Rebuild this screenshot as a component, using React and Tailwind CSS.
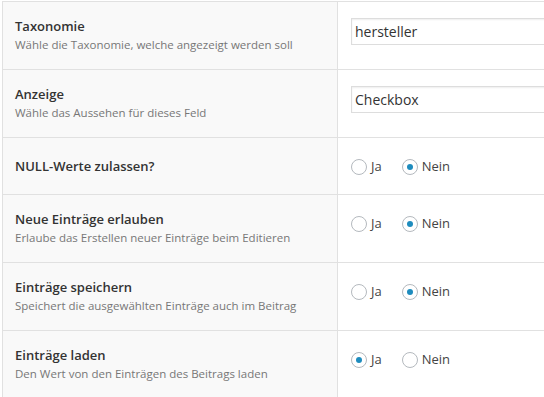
const rows = [
  { label: 'Taxonomie', desc: 'Wähle die Taxonomie, welche angezeigt werden soll', type: 'input', value: 'hersteller' },
  { label: 'Anzeige', desc: 'Wähle das Aussehen für dieses Feld', type: 'input', value: 'Checkbox' },
  { label: 'NULL-Werte zulassen?', type: 'radio', checked: 'Nein' },
  { label: 'Neue Einträge erlauben', desc: 'Erlaube das Erstellen neuer Einträge beim Editieren', type: 'radio', checked: 'Nein' },
  { label: 'Einträge speichern', desc: 'Speichert die ausgewählten Einträge auch im Beitrag', type: 'radio', checked: 'Nein' },
  { label: 'Einträge laden', desc: 'Den Wert von den Einträgen des Beitrags laden', type: 'radio', checked: 'Ja' },
]

function Radio({ on }) {
  return (
    <svg width="16" height="16" viewBox="0 0 16 16" className="mr-[4px] shrink-0">
      <circle cx="8" cy="8" r="7.5" fill="#fff" stroke="#b4b9be" />
      {on && <circle cx="8" cy="8" r="3" fill="#1e8cbe" />}
    </svg>
  )
}

export default function App() {
  return (
    <div className="h-[397px] w-[544px] overflow-hidden bg-white pl-[2px] pt-[1px] font-['Open_Sans',sans-serif]">
      <div className="border-l border-t border-[#e1e1e1]">
        {rows.map((row) => (
          <div key={row.label} className={`flex border-b border-[#e1e1e1] ${row.desc ? 'h-[68px]' : 'h-[57px]'}`}>
            <div className={`w-[335px] shrink-0 border-r border-[#e1e1e1] bg-[#f9f9f9] px-3 ${row.desc ? 'pt-[14px]' : 'pt-[18px]'}`}>
              <div className="text-[13px] font-semibold leading-5 text-[#333]">{row.label}</div>
              {row.desc && <div className="text-[11.5px] leading-[18px] text-[#777]">{row.desc}</div>}
            </div>
            <div className={`flex-1 overflow-hidden pl-[13px] ${row.type === 'input' ? 'pt-[16px]' : 'pt-[19px]'}`}>
              {row.type === 'input' ? (
                <div className="flex h-[27px] w-[300px] items-center border border-[#ddd] px-[3px] text-[14px] text-[#333] shadow-[inset_0_1px_2px_rgba(0,0,0,0.07)]">
                  {row.value}
                </div>
              ) : (
                <div className="flex h-5 items-center text-[13px] text-[#444]">
                  <span className="mr-[20px] flex items-center"><Radio on={row.checked === 'Ja'} />Ja</span>
                  <span className="flex items-center"><Radio on={row.checked === 'Nein'} />Nein</span>
                </div>
              )}
            </div>
          </div>
        ))}
      </div>
    </div>
  )
}
